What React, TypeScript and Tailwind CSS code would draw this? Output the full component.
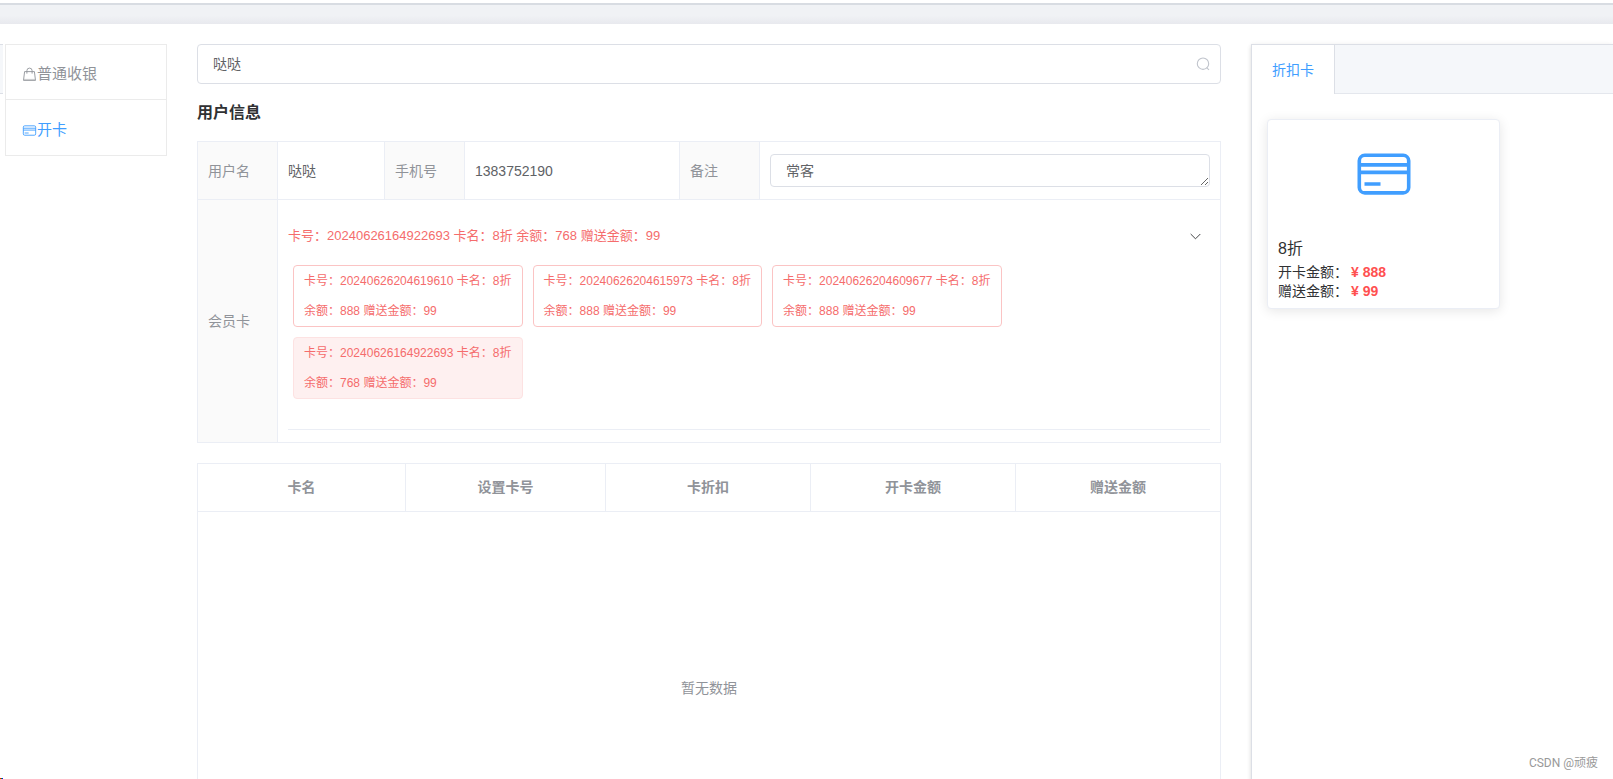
import React from "react";

type MemberCard = { no: string; name: string; balance: number; gift: number };

const memberCards: MemberCard[] = [
  { no: "20240626204619610", name: "8折", balance: 888, gift: 99 },
  { no: "20240626204615973", name: "8折", balance: 888, gift: 99 },
  { no: "20240626204609677", name: "8折", balance: 888, gift: 99 },
  { no: "20240626164922693", name: "8折", balance: 768, gift: 99 },
];
const selectedNo = "20240626164922693";

function BankCardIcon({ className }: { className: string }) {
  return (
    <svg className={className} viewBox="0 0 60 60" fill="none" stroke="currentColor" strokeWidth="3.6" aria-hidden="true">
      <rect x="5.3" y="11.3" width="49.4" height="37.6" rx="5.5" />
      <path d="M5 20.9h50M5 28.4h50M10.5 40h16" />
    </svg>
  );
}

function BagIcon({ className }: { className: string }) {
  return (
    <svg className={className} viewBox="0 0 15 15" fill="none" stroke="currentColor" aria-hidden="true">
      <path d="M2.6 4.6h9.8l1.1 8.8h-12zM4.9 6.6V3.7a2.6 2.6 0 0 1 5.2 0v2.9" strokeWidth="0.9" />
      <path d="M2 12.4h11" strokeWidth="0.9" opacity="0.5" />
    </svg>
  );
}

function SearchIcon({ className }: { className: string }) {
  return (
    <svg className={className} viewBox="0 0 14 14" fill="none" stroke="currentColor" strokeWidth="1.1" aria-hidden="true">
      <circle cx="7" cy="6.7" r="5.7" />
      <path d="M10.6 10.6l2.4 2.2" />
    </svg>
  );
}

function ChevronDown({ className }: { className: string }) {
  return (
    <svg className={className} viewBox="0 0 13 13" fill="none" stroke="currentColor" strokeWidth="0.9" aria-hidden="true">
      <path d="M1.7 4l4.8 4.8L11.3 4" />
    </svg>
  );
}

function SideMenu() {
  return (
    <nav className="self-start border border-[#ebebeb] text-[15px]">
      <a href="#cashier" className="flex h-[55px] items-center border-b border-[#ebebeb] px-4 pt-[5px] text-[#909399]">
        <BagIcon className="size-[15px]" />
        普通收银
      </a>
      <a href="#open-card" className="flex h-[55px] items-center px-4 pt-[5px] text-[#409eff]">
        <BankCardIcon className="size-[15px]" />
        开卡
      </a>
    </nav>
  );
}

function UserInfo() {
  const label = "border border-[#ebeef5] bg-[#fafafa] px-[10px] text-left font-normal text-[#909399]";
  const cell = "border border-[#ebeef5] px-[10px] py-3";
  return (
    <table className="w-full table-fixed border-collapse text-sm text-[#606266]">
      <colgroup>
        <col className="w-[80px]" />
        <col className="w-[107px]" />
        <col className="w-[80px]" />
        <col className="w-[215px]" />
        <col className="w-[80px]" />
        <col />
      </colgroup>
      <tbody>
        <tr>
          <th scope="row" className={label}>用户名</th>
          <td className={cell}>哒哒</td>
          <th scope="row" className={label}>手机号</th>
          <td className={cell}>1383752190</td>
          <th scope="row" className={label}>
            <label htmlFor="remark">备注</label>
          </th>
          <td className={cell}>
            <textarea
              id="remark"
              rows={1}
              defaultValue="常客"
              className="block h-[33px] w-full resize-y overflow-hidden rounded border border-[#dcdfe6] bg-white px-[15px] pt-[6px] pb-1 text-sm leading-[21px] outline-none"
            />
          </td>
        </tr>
        <tr>
          <th scope="row" className={label}>会员卡</th>
          <td colSpan={5} className={cell}>
            <div className="border-b border-[#ebeef5]">
              <button type="button" className="flex h-12 w-full items-center justify-between pr-2 text-[13px]">
                <span className="text-[#f56c6c]">卡号：20240626164922693 卡名：8折 余额：768 赠送金额：99</span>
                <ChevronDown className="size-[13px] text-[#303133]" />
              </button>
              <div className="flex flex-wrap gap-[10px] px-[5px] pt-[5px] pb-[30px]">
                {memberCards.map((c) => (
                  <button
                    key={c.no}
                    type="button"
                    className={
                      "rounded border px-[10px] text-left text-xs leading-[30px] text-[#f56c6c] " +
                      (c.no === selectedNo ? "border-[#fde2e2] bg-[#fef0f0]" : "border-[#fbc4c4] bg-white")
                    }
                  >
                    <span className="block">卡号：{c.no} 卡名：{c.name}</span>
                    <span className="block">余额：{c.balance} 赠送金额：{c.gift}</span>
                  </button>
                ))}
              </div>
            </div>
          </td>
        </tr>
      </tbody>
    </table>
  );
}

function OrderTable() {
  const head = "h-12 border border-[#ebeef5] pb-[2px] font-bold";
  return (
    <table className="mt-5 w-full table-fixed border-collapse text-sm text-[#909399]">
      <colgroup>
        <col className="w-[208px]" />
        <col className="w-[200px]" />
        <col />
        <col />
        <col />
      </colgroup>
      <thead>
        <tr>
          <th className={head}>卡名</th>
          <th className={head}>设置卡号</th>
          <th className={head}>卡折扣</th>
          <th className={head}>开卡金额</th>
          <th className={head}>赠送金额</th>
        </tr>
      </thead>
      <tbody>
        <tr>
          <td colSpan={5} className="h-[352px] border border-[#ebeef5] text-center">暂无数据</td>
        </tr>
      </tbody>
    </table>
  );
}

function Price({ label, value }: { label: string; value: number }) {
  return (
    <p>
      {label}：<span className="ml-[3px] font-bold text-[#ff5050]">¥ {value}</span>
    </p>
  );
}

function CardPanel() {
  return (
    <section className="border-t border-l border-[#dcdfe6] bg-white shadow-[0_2px_4px_0_rgba(0,0,0,0.12),0_0_6px_0_rgba(0,0,0,0.04)]">
      <div role="tablist" className="flex h-[49px] border-b border-[#e4e7ed] bg-[#f5f7fa]">
        <button
          type="button"
          role="tab"
          aria-selected="true"
          className="-mb-px border-r border-[#dcdfe6] bg-white px-5 text-sm text-[#409eff]"
        >
          折扣卡
        </button>
      </div>
      <div className="px-[15px] pt-[25px]">
        <article className="w-[233px] max-w-full rounded border border-[#ebeef5] bg-white px-[10px] pb-[7px] text-sm leading-[19px] text-[#303133] shadow-[0_2px_12px_0_rgba(0,0,0,0.1)]">
          <div className="flex h-[108px] items-center justify-center">
            <BankCardIcon className="size-[60px] text-[#409eff]" />
          </div>
          <h3 className="mt-[7px] text-base leading-7">8折</h3>
          <Price label="开卡金额" value={888} />
          <Price label="赠送金额" value={99} />
        </article>
      </div>
    </section>
  );
}

export default function App() {
  return (
    <div className="flex h-screen flex-col overflow-hidden bg-white font-['Liberation_Sans','Noto_Sans_CJK_SC',sans-serif] text-[#303133]">
      <header className="h-6 shrink-0 border-t-3 border-white bg-linear-to-b from-[#f0f2f5] from-60% to-[#e8e9ee]">
        <div className="h-[2px] bg-[#d8dce2]" />
      </header>
      <div className="flex min-h-0 flex-1 gap-[2px] pt-5">
        <aside className="flex w-[3px] shrink-0 flex-col justify-between">
          <div className="h-[50px] border-t border-b border-[#dcdfe6] bg-[#f5f7fa]" />
          <div className="flex h-px">
            <i className="flex-1 bg-[#ff0000]" />
            <i className="flex-1 bg-[#00a000]" />
            <i className="flex-1 bg-[#0000ff]" />
          </div>
        </aside>
        <div className="grid flex-1 grid-cols-[162px_minmax(0,1024fr)_minmax(0,362fr)] gap-[30px]">
          <SideMenu />
          <main>
            <div className="flex h-10 items-center rounded border border-[#dcdfe6] px-[15px] pr-[10px]">
              <input
                type="text"
                aria-label="搜索用户"
                defaultValue="哒哒"
                className="min-w-0 flex-1 text-sm text-[#606266] outline-none"
              />
              <SearchIcon className="size-[14px] text-[#c0c4cc]" />
            </div>
            <h2 className="mt-[17px] mb-4 text-base leading-6 font-bold">用户信息</h2>
            <UserInfo />
            <OrderTable />
          </main>
          <CardPanel />
        </div>
      </div>
      <footer className="absolute right-[15px] bottom-2 font-[Roboto,'Noto_Sans_CJK_SC',sans-serif] text-xs text-[#999999]">
        CSDN @顽疲
      </footer>
    </div>
  );
}
